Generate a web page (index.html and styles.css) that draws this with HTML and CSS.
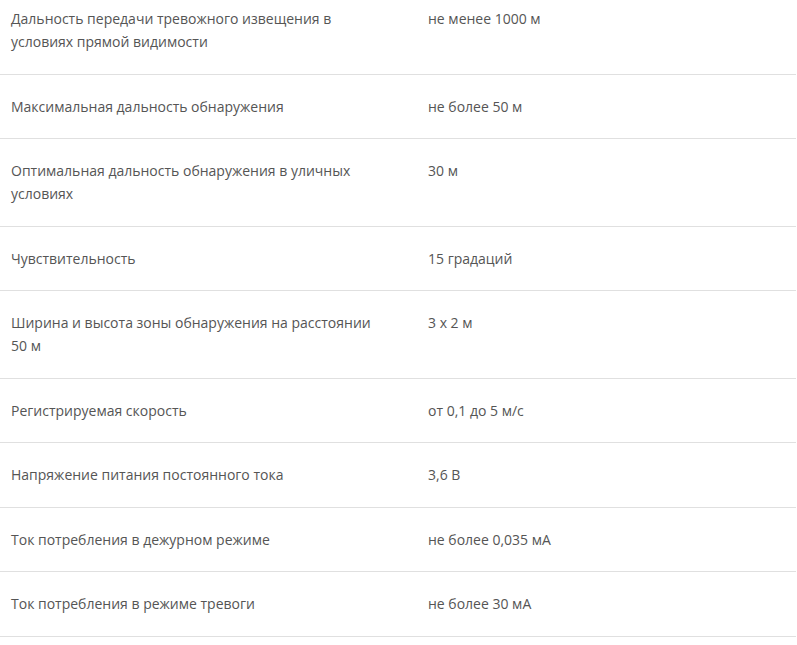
FILE: index.html
```html
<!DOCTYPE html>
<html lang="ru">
  <head>
    <meta charset="UTF-8" />
    <title>Технические характеристики</title>
    <link rel="stylesheet" href="styles.css">
  </head>
  <body>
    <div class="specs">
      <div class="spec-row">
        <div class="spec-name">Дальность передачи тревожного извещения в условиях прямой видимости</div>
        <div class="spec-value">не менее 1000 м</div>
      </div>
      <div class="spec-row">
        <div class="spec-name">Максимальная дальность обнаружения</div>
        <div class="spec-value">не более 50 м</div>
      </div>
      <div class="spec-row">
        <div class="spec-name">Оптимальная дальность обнаружения в уличных условиях</div>
        <div class="spec-value">30 м</div>
      </div>
      <div class="spec-row">
        <div class="spec-name">Чувствительность</div>
        <div class="spec-value">15 градаций</div>
      </div>
      <div class="spec-row">
        <div class="spec-name">Ширина и высота зоны обнаружения на расстоянии 50 м</div>
        <div class="spec-value">3 х 2 м</div>
      </div>
      <div class="spec-row">
        <div class="spec-name">Регистрируемая скорость</div>
        <div class="spec-value">от 0,1 до 5 м/с</div>
      </div>
      <div class="spec-row">
        <div class="spec-name">Напряжение питания постоянного тока</div>
        <div class="spec-value">3,6 В</div>
      </div>
      <div class="spec-row">
        <div class="spec-name">Ток потребления в дежурном режиме</div>
        <div class="spec-value">не более 0,035 мА</div>
      </div>
      <div class="spec-row">
        <div class="spec-name">Ток потребления в режиме тревоги</div>
        <div class="spec-value">не более 30 мА</div>
      </div>
    </div>
  </body>
</html>
```

FILE: styles.css
```css
body {
  margin: 0;
  background-color: #ffffff;
  font-family: "Open Sans", "Noto Sans", sans-serif;
  font-size: 14px;
  line-height: 23px;
  color: #555555;
}

.specs {
  width: 796px;
  margin-top: -13px; /* first row is cut off at the top */
}

.spec-row {
  display: grid;
  grid-template-columns: 417px 1fr;
  border-bottom: 1px solid #e0e0e0;
}

.spec-name {
  padding: 20.25px 30px 20.25px 11px;
}

.spec-value {
  padding: 20.25px 11px;
}
```
